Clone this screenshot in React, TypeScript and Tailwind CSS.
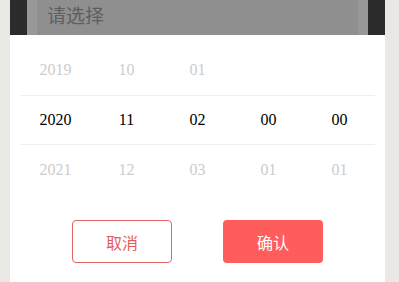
import React from "react";

const cols = [
  ["2019", "2020", "2021"],
  ["10", "11", "12"],
  ["01", "02", "03"],
  ["", "00", "01"],
  ["", "00", "01"],
];

const App = () => {
  return (
    <div className="flex h-[282px] w-[399px] overflow-hidden bg-[#e9e8e4] px-[10px] pr-[14px]">
      <div className="flex w-[375px] flex-col bg-white">
        {/* masked input */}
        <div className="flex h-[35px] bg-[#2b2b2b] px-[17px]">
          <div className="flex flex-1 bg-[#989898] px-[10px]">
            <div
              className="flex flex-1 items-start bg-[#8f8f8f] pl-[10px] pt-[3px] text-[19px] leading-[24px] text-[#5e5e5e]"
              style={{ fontFamily: '"Noto Sans CJK SC", sans-serif' }}
            >
              请选择
            </div>
          </div>
        </div>

        {/* picker */}
        <div
          className="mx-[10px] mt-[10px] flex flex-col text-[16px]"
          style={{ fontFamily: '"Liberation Serif", serif' }}
        >
          {[0, 1, 2].map((r) => (
            <div
              key={r}
              className={
                r === 1
                  ? "grid h-[50px] grid-cols-5 items-center border-y border-[#eeeeee] text-black"
                  : "grid h-[50px] grid-cols-5 items-center text-[#cccccc]"
              }
            >
              {cols.map((c, i) => (
                <div key={i} className="text-center">
                  {c[r]}
                </div>
              ))}
            </div>
          ))}
        </div>

        {/* actions */}
        <div
          className="mt-[25px] flex justify-center gap-[51px] text-[16px]"
          style={{ fontFamily: '"Noto Sans CJK SC", sans-serif' }}
        >
          <button className="h-[43px] w-[100px] rounded-[4px] border border-[#e46464] bg-white text-[#e25c5c]">
            取消
          </button>
          <button className="h-[43px] w-[100px] rounded-[4px] bg-[#ff5c5c] text-white">
            确认
          </button>
        </div>
      </div>
    </div>
  );
};

export default App;
